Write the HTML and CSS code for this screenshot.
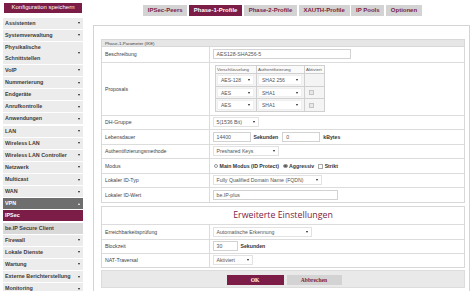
FILE: index.html
```html
<!DOCTYPE html>
<html>
<head>
<meta charset="utf-8">
<link rel="stylesheet" href="styles.css">
</head>
<body>
<div class="page">
  <aside class="side">
    <div class="save">Konfiguration speichern</div>
    <ul class="menu">
      <li class="item"><span>Assistenten</span><i class="arr"></i></li>
      <li class="item"><span>Systemverwaltung</span><i class="arr"></i></li>
      <li class="item"><span>Physikalische<br>Schnittstellen</span><i class="arr"></i></li>
      <li class="item"><span>VoIP</span><i class="arr"></i></li>
      <li class="item"><span>Nummerierung</span><i class="arr"></i></li>
      <li class="item"><span>Endgeräte</span><i class="arr"></i></li>
      <li class="item"><span>Anrufkontrolle</span><i class="arr"></i></li>
      <li class="item"><span>Anwendungen</span><i class="arr"></i></li>
      <li class="item"><span>LAN</span><i class="arr"></i></li>
      <li class="item"><span>Wireless LAN</span><i class="arr"></i></li>
      <li class="item"><span>Wireless LAN Controller</span><i class="arr"></i></li>
      <li class="item"><span>Netzwerk</span><i class="arr"></i></li>
      <li class="item"><span>Multicast</span><i class="arr"></i></li>
      <li class="item"><span>WAN</span><i class="arr"></i></li>
      <li class="item open"><span>VPN</span><i class="arr up"></i></li>
      <li class="item sub active"><span>IPSec</span></li>
      <li class="item sub"><span>be.IP Secure Client</span></li>
      <li class="item"><span>Firewall</span><i class="arr"></i></li>
      <li class="item"><span>Lokale Dienste</span><i class="arr"></i></li>
      <li class="item"><span>Wartung</span><i class="arr"></i></li>
      <li class="item"><span>Externe Berichterstellung</span><i class="arr"></i></li>
      <li class="item"><span>Monitoring</span><i class="arr"></i></li>
    </ul>
  </aside>
  <main class="main">
    <nav class="tabs">
      <span class="tab">IPSec-Peers</span>
      <span class="tab active">Phase-1-Profile</span>
      <span class="tab">Phase-2-Profile</span>
      <span class="tab">XAUTH-Profile</span>
      <span class="tab">IP Pools</span>
      <span class="tab">Optionen</span>
    </nav>
    <section class="panel">
      <div class="box">
        <div class="boxhead">Phase-1-Parameter (IKE)</div>
        <table class="form">
          <tr class="r15"><td class="lab">Beschreibung</td><td class="val"><span class="input w138">AES128-SHA256-5</span></td></tr>
          <tr class="rprop"><td class="lab">Proposals</td><td class="val">
            <table class="prop">
              <tr class="ph"><td class="c1">Verschlüsselung</td><td class="c2">Authentifizierung</td><td class="c3">Aktiviert</td></tr>
              <tr><td><span class="sel psel">AES-128<i class="arr"></i></span></td><td><span class="sel psel">SHA2 256<i class="arr"></i></span></td><td></td></tr>
              <tr><td><span class="sel psel">AES<i class="arr"></i></span></td><td><span class="sel psel">SHA1<i class="arr"></i></span></td><td><span class="chk dis"></span></td></tr>
              <tr><td><span class="sel psel">AES<i class="arr"></i></span></td><td><span class="sel psel">SHA1<i class="arr"></i></span></td><td><span class="chk dis"></span></td></tr>
            </table>
          </td></tr>
          <tr><td class="lab">DH-Gruppe</td><td class="val"><span class="sel w46">5(1536 Bit)<i class="arr"></i></span></td></tr>
          <tr><td class="lab">Lebensdauer</td><td class="val"><span class="input w38">14400</span><b class="unit">Sekunden</b><span class="input w38">0</span><b class="unit">kBytes</b></td></tr>
          <tr><td class="lab">Authentifizierungsmethode</td><td class="val"><span class="sel w66">Preshared Keys<i class="arr"></i></span></td></tr>
          <tr><td class="lab">Modus</td><td class="val"><span class="radio"></span><b class="opt">Main Modus (ID Protect)</b><span class="radio on"></span><b class="opt">Aggressiv</b><span class="chk"></span><b class="opt">Strikt</b></td></tr>
          <tr><td class="lab">Lokaler ID-Typ</td><td class="val"><span class="sel w109">Fully Qualified Domain Name (FQDN)<i class="arr"></i></span></td></tr>
          <tr><td class="lab">Lokaler ID-Wert</td><td class="val"><span class="input w125">be.IP-plus</span></td></tr>
        </table>
      </div>
      <div class="box box2">
        <div class="title">Erweiterte Einstellungen</div>
        <table class="form">
          <tr><td class="lab">Erreichbarkeitsprüfung</td><td class="val"><span class="sel w99">Automatische Erkennung<i class="arr"></i></span></td></tr>
          <tr><td class="lab">Blockzeit</td><td class="val"><span class="input w25">30</span><b class="unit">Sekunden</b></td></tr>
          <tr><td class="lab">NAT-Traversal</td><td class="val"><span class="sel w40">Aktiviert<i class="arr"></i></span></td></tr>
        </table>
      </div>
      <div class="footer">
        <span class="btn ok">OK</span>
        <span class="btn cancel">Abbrechen</span>
      </div>
    </section>
  </main>
</div>
</body>
</html>
```
FILE: styles.css
```css
* { box-sizing: border-box; }
html, body { margin: 0; padding: 0; background: #fff; }
body { font-family: "Liberation Sans", Arial, sans-serif; color: #444; width: 474px; height: 291px; overflow: hidden; }
.page { display: flex; align-items: flex-start; }

.side { width: 84px; padding: 3px 0 0 3px; flex: none; }
.save { margin-left: 1px; width: 78px; height: 9.5px; line-height: 9.5px; background: #7b1d46; color: #fff; font-size: 6px; text-align: center; margin-bottom: 5px; }
.menu { list-style: none; margin: 0; padding: 0; }
.item { display: flex; justify-content: space-between; align-items: center; width: 80px; line-height: 11px; margin-bottom: 1.14px; background: #ececec; color: #3a3a3a; font-size: 5.4px; font-weight: bold; padding: 0 3px 0 2px; }
.item.open { background: #6e6e6e; color: #fff; }
.item.sub { background: #d9d9d9; }
.item.sub.active { background: #7b1d46; color: #fff; }
.arr { display: inline-block; width: 0; height: 0; border-left: 1.6px solid transparent; border-right: 1.6px solid transparent; border-top: 2.2px solid #222; }
.arr.up { border-top: 0; border-bottom: 2.2px solid #fff; }

.main { margin-left: 9px; width: 377px; flex: none; }
.tabs { display: flex; justify-content: center; gap: 1.6px; margin-top: 5px; padding-left: 2px; }
.tab { background: #d3d3d3; color: #7b1d46; font-weight: bold; font-size: 6px; line-height: 11px; padding: 0 4.8px; }
.tab.active { background: #7b1d46; color: #fff; }

.panel { margin-top: 9px; border: 1px solid #d4d4d4; padding: 13px 4px 2px 7px; height: 268px; }
.box { border: 1px solid #d8d8d8; }
.boxhead { height: 7px; line-height: 7px; background: #e6e6e6; font-size: 4.4px; padding-left: 3px; color: #444; border-bottom: 1px solid #d8d8d8; }
.form { width: 100%; border-collapse: collapse; }
.form > tbody > tr > td { border-bottom: 1px solid #dcdcdc; height: 14.5px; padding: 0; font-size: 5.2px; vertical-align: middle; }
.form > tbody > tr:last-child > td { border-bottom: 0; }
.form > tbody > tr.r15 > td { height: 15px; }
.form > tbody > tr.rprop > td { height: 53px; }
.form td.lab { width: 107px; padding-left: 3px; border-right: 1px solid #dcdcdc; color: #444; }
.form td.val { padding-left: 3px; }

.input, .sel { display: inline-flex; align-items: center; justify-content: space-between; height: 10px; border: 1px solid #d2d2d2; background: #fff; padding: 0 3px; font-size: 5.2px; color: #555; vertical-align: middle; }
.sel { border-color: #e2e2e2; }
.sel .arr { border-top-color: #222; margin-left: 3px; }
.w25 { width: 25px; } .w38 { width: 38px; } .w40 { width: 40px; } .w46 { width: 46px; }
.w66 { width: 66px; } .w99 { width: 99px; } .w109 { width: 109px; } .w125 { width: 125px; } .w138 { width: 138px; }
.unit { font-size: 5.2px; color: #333; margin: 0 4px 0 3px; vertical-align: middle; }
.opt { font-size: 5.2px; color: #333; margin: 0 3px 0 1.5px; vertical-align: middle; }

.prop { border-collapse: collapse; margin-left: 2px; }
.prop td { border: 1px solid #d0d0d0; background: #f4f4f4; height: 12.7px; padding: 0 1.5px; font-size: 4.4px; vertical-align: middle; }
.prop tr.ph td { height: 8px; background: #fafafa; padding: 0 1.5px; color: #555; }
.prop .c1 { width: 41px; } .prop .c2 { width: 48px; } .prop .c3 { width: 20px; }
.psel { width: 100%; height: 9.5px; border-color: #efefef; font-size: 5px; }

.chk { display: inline-block; width: 5px; height: 5px; border: 1px solid #aaa; background: #fff; vertical-align: middle; margin-left: 1px; }
.chk.dis { border-color: #c4c4c4; background: #e8e8e8; margin-left: 3px; }
.radio { display: inline-block; width: 4.6px; height: 4.6px; border: 0.8px solid #999; border-radius: 50%; background: #fff; vertical-align: middle; margin-left: 1px; }
.radio.on { background: radial-gradient(circle, #555 0 1.1px, #fff 1.3px); }

.box2 { margin-top: 3px; }
.title { height: 18px; line-height: 17px; text-align: center; font-family: "Open Sans", sans-serif; font-size: 8.8px; color: #7b1d46; border-bottom: 1px solid #dcdcdc; }
.box2 .form > tbody > tr > td { height: 14px; }

.footer { margin-top: 2px; height: 18px; background: #e9e9e9; border: 1px solid #dcdcdc; display: flex; justify-content: center; align-items: flex-end; gap: 3px; padding: 0 0 2px 2px; }
.btn { display: inline-block; width: 57px; height: 10px; line-height: 10px; text-align: center; font-weight: bold; font-size: 5.6px; font-family: "Liberation Serif", serif; }
.ok { background: #7b1d46; color: #fff; }
.cancel { background: #d3d3d3; color: #7b1d46; width: 55px; }
```
